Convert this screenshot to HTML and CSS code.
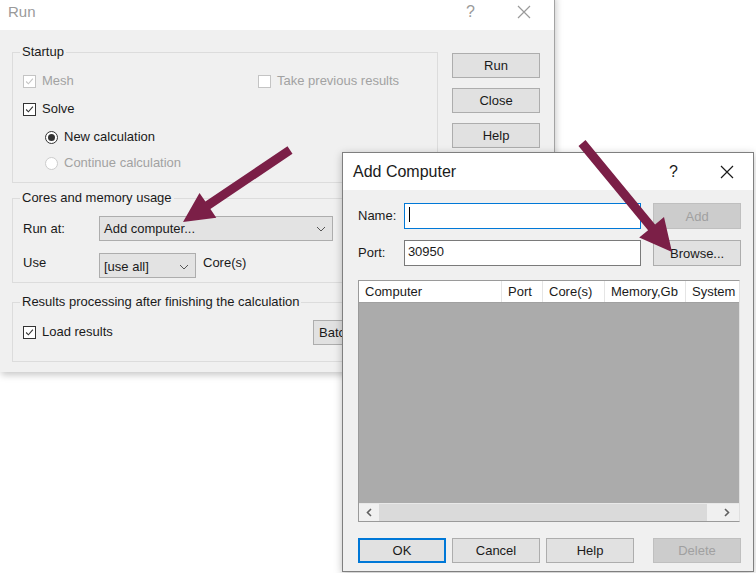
FILE: index.html
```html
<!DOCTYPE html>
<html lang="en">

<head>
    <meta charset="UTF-8">
    <title>Run / Add Computer</title>
    <link rel="stylesheet" href="styles.css">
</head>

<body>

    <div class="win run-win">
        <div class="titlebar inactive">
            <span class="title">Run</span>
            <span class="cap-btn">?</span>
            <span class="cap-btn">
                <svg width="14" height="14" viewBox="0 0 14 14"><path d="M1 1 L13 13 M13 1 L1 13" /></svg>
            </span>
        </div>
        <div class="run-body">
            <div class="run-main">
                <div class="group startup">
                    <span class="caption">Startup</span>
                    <div class="row two-col">
                        <span class="check disabled"><span class="box"><svg viewBox="0 0 13 13"><path d="M2.5 6.5 L5.2 9.2 L10.5 3.2" /></svg></span>Mesh</span>
                        <span class="check disabled"><span class="box"></span>Take previous results</span>
                    </div>
                    <div class="row">
                        <span class="check"><span class="box"><svg viewBox="0 0 13 13"><path d="M2.5 6.5 L5.2 9.2 L10.5 3.2" /></svg></span>Solve</span>
                    </div>
                    <div class="row indent">
                        <span class="check"><span class="radio on"></span>New calculation</span>
                    </div>
                    <div class="row indent last">
                        <span class="check disabled"><span class="radio"></span>Continue calculation</span>
                    </div>
                </div>

                <div class="group cores">
                    <span class="caption">Cores and memory usage</span>
                    <div class="form-row">
                        <span class="form-label">Run at:</span>
                        <div class="combo wide">Add computer...
                            <svg class="chev" width="10" height="6" viewBox="0 0 10 6"><path d="M1 1 L5 5 L9 1" /></svg>
                        </div>
                    </div>
                    <div class="form-row top">
                        <span class="form-label">Use</span>
                        <div class="combo narrow">[use all]
                            <svg class="chev" width="10" height="6" viewBox="0 0 10 6"><path d="M1 1 L5 5 L9 1" /></svg>
                        </div>
                        <span class="after">Core(s)</span>
                    </div>
                </div>

                <div class="group results">
                    <span class="caption">Results processing after finishing the calculation</span>
                    <div class="row results-row">
                        <span class="check"><span class="box"><svg viewBox="0 0 13 13"><path d="M2.5 6.5 L5.2 9.2 L10.5 3.2" /></svg></span>Load results</span>
                        <button class="btn batch">Batch...</button>
                    </div>
                </div>
            </div>

            <div class="run-side">
                <button class="btn">Run</button>
                <button class="btn">Close</button>
                <button class="btn">Help</button>
            </div>
        </div>
    </div>

    <div class="win add-win">
        <div class="titlebar">
            <span class="title">Add Computer</span>
            <span class="cap-btn">?</span>
            <span class="cap-btn">
                <svg width="14" height="14" viewBox="0 0 14 14"><path d="M1 1 L13 13 M13 1 L1 13" /></svg>
            </span>
        </div>
        <div class="add-body">
            <div class="field-row">
                <span class="field-label">Name:</span>
                <div class="input focus"><span class="caret"></span></div>
                <button class="btn disabled">Add</button>
            </div>
            <div class="field-row">
                <span class="field-label">Port:</span>
                <div class="input">30950</div>
                <button class="btn">Browse...</button>
            </div>

            <div class="list">
                <div class="list-head">
                    <span class="col c-computer">Computer</span>
                    <span class="col c-port">Port</span>
                    <span class="col c-cores">Core(s)</span>
                    <span class="col c-mem">Memory,Gb</span>
                    <span class="col c-sys">System</span>
                </div>
                <div class="list-area"></div>
                <div class="hscroll">
                    <span class="sb-btn"><svg width="6" height="9" viewBox="0 0 6 9"><path d="M5 1 L1.5 4.5 L5 8" /></svg></span>
                    <span class="sb-thumb"></span>
                    <span class="sb-btn right"><svg width="6" height="9" viewBox="0 0 6 9"><path d="M1 1 L4.5 4.5 L1 8" /></svg></span>
                </div>
            </div>

            <div class="btn-row">
                <button class="btn focus">OK</button>
                <button class="btn">Cancel</button>
                <button class="btn">Help</button>
                <button class="btn disabled push">Delete</button>
            </div>
        </div>
    </div>

    <svg class="arrows" width="756" height="573" viewBox="0 0 756 573">
        <polygon points="292.5,153.7 210.4,209 216.3,217.7 183,222 199.5,192.9 205.4,201.6 287.5,146.3" />
        <polygon points="585.5,140.1 655.1,224.4 664,217.1 672,252 639.2,237.5 648.1,230.2 578.5,145.9" />
    </svg>

</body>

</html>
```

FILE: styles.css
```css
body {
    margin: 0;
    width: 756px;
    height: 573px;
    overflow: hidden;
    background-color: #ffffff;
    font-family: "Liberation Sans", Arial, sans-serif;
    font-size: 13px;
    line-height: 16px;
    color: #000;
    position: relative;
}

/* windows */
.win {
    position: absolute;
    box-sizing: border-box;
    display: flex;
    flex-direction: column;
    background-color: #f0f0f0;
}

.run-win {
    left: 0;
    top: -6px;
    width: 555px;
    height: 378px;
    border-right: 1px solid #a3a3a3;
    box-shadow: 1px 3px 7px rgba(0, 0, 0, 0.22);
}

.add-win {
    left: 342px;
    top: 152px;
    width: 412px;
    height: 420px;
    border: 1px solid #7f7f7f;
    box-shadow: 0 2px 8px rgba(0, 0, 0, 0.25);
}

.titlebar {
    display: flex;
    align-items: center;
    height: 37px;
    flex: none;
    background-color: #fff;
    padding-left: 10px;
    color: #1a1a1a;
}

.titlebar .title {
    font-size: 16px;
    margin-right: auto;
}

.titlebar.inactive {
    height: 36px;
    padding-left: 8px;
    padding-right: 4px;
    color: #9a9a9a;
}

.titlebar.inactive .title {
    font-size: 15px;
}

.cap-btn {
    width: 53px;
    height: 100%;
    display: flex;
    align-items: center;
    justify-content: center;
    font-size: 16px;
}

.cap-btn svg path {
    stroke: currentColor;
    stroke-width: 1.2;
    fill: none;
}

/* Run dialog body */
.run-body {
    flex: 1;
    display: flex;
    gap: 14px;
    padding: 22px 0 0 12px;
}

.run-main {
    width: 426px;
    display: flex;
    flex-direction: column;
}

.group {
    position: relative;
    border: 1px solid #dcdcdc;
}

.caption {
    position: absolute;
    top: -9px;
    left: 7px;
    padding: 0 2px;
    background-color: #f0f0f0;
    color: #1a1a1a;
}

.startup {
    padding: 14px 0 7px 10px;
}

.cores {
    margin-top: 15px;
    padding: 17px 0 4px 10px;
}

.results {
    margin-top: 19px;
    padding: 16px 0 16px 10px;
}

.row {
    height: 28px;
    display: flex;
    align-items: center;
}

.row.last {
    height: 24px;
}

.row.indent {
    padding-left: 22px;
}

.two-col {
    display: grid;
    grid-template-columns: 235px auto;
    align-items: center;
}

.check {
    display: flex;
    align-items: center;
    gap: 6px;
    color: #1a1a1a;
}

.check.disabled {
    color: #a2a2a2;
}

.box {
    width: 13px;
    height: 13px;
    box-sizing: border-box;
    border: 1px solid #333;
    background-color: #fff;
    display: flex;
}

.box svg {
    width: 11px;
    height: 11px;
}

.box svg path {
    fill: none;
    stroke: #333;
    stroke-width: 1.3;
}

.disabled .box {
    border-color: #c4c4c4;
}

.disabled .box svg path {
    stroke: #c4c4c4;
}

.radio {
    width: 13px;
    height: 13px;
    box-sizing: border-box;
    border: 1px solid #333;
    border-radius: 50%;
    background-color: #fff;
    display: flex;
    align-items: center;
    justify-content: center;
}

.radio.on::after {
    content: "";
    width: 7px;
    height: 7px;
    border-radius: 50%;
    background-color: #333;
}

.disabled .radio {
    border-color: #cccccc;
}

.form-row {
    display: flex;
    align-items: center;
}

.form-row + .form-row {
    margin-top: 12px;
}

.form-row.top {
    align-items: flex-start;
}

.form-row.top .form-label,
.form-row.top .after {
    padding-top: 2px;
}

.form-label {
    width: 76px;
    color: #1a1a1a;
}

.after {
    margin-left: 7px;
    color: #1a1a1a;
}

.combo {
    height: 25px;
    box-sizing: border-box;
    border: 1px solid #adadad;
    background-color: #e3e3e3;
    display: flex;
    align-items: center;
    padding-left: 4px;
    color: #1a1a1a;
}

.combo.wide {
    width: 234px;
}

.combo.narrow {
    width: 97px;
    padding-top: 3px;
}

.chev {
    margin-left: auto;
    margin-right: 6px;
}

.chev path {
    fill: none;
    stroke: #555;
    stroke-width: 1;
}

.results-row {
    height: 26px;
}

.btn {
    width: 88px;
    height: 25px;
    box-sizing: border-box;
    border: 1px solid #adadad;
    background-color: #e1e1e1;
    font-family: inherit;
    font-size: 13px;
    color: #1a1a1a;
    padding: 0;
}

.batch {
    margin-left: auto;
    margin-right: 36px;
    text-align: left;
    padding-left: 5px;
}

.run-side {
    padding-top: 1px;
    display: flex;
    flex-direction: column;
    gap: 10px;
}

/* Add Computer body */
.add-body {
    flex: 1;
    padding: 13px 12px 0 15px;
    display: flex;
    flex-direction: column;
}

.field-row {
    display: flex;
    align-items: center;
    height: 26px;
}

.field-row + .field-row {
    margin-top: 11px;
}

.field-label {
    width: 46px;
    color: #1a1a1a;
}

.input {
    width: 238px;
    height: 26px;
    box-sizing: border-box;
    border: 1px solid #7a7a7a;
    background-color: #fff;
    padding: 3px 0 0 3px;
    margin-right: 12px;
    color: #1a1a1a;
}

.input.focus {
    border-color: #0078d7;
}

.caret {
    display: block;
    width: 1px;
    height: 15px;
    margin-left: 1px;
    background-color: #000;
}

.field-row .btn {
    height: 26px;
}

.btn.disabled {
    background-color: #cccccc;
    border-color: #bfbfbf;
    color: #a0a0a0;
}

.list {
    margin-top: 14px;
    width: 382px;
    height: 242px;
    box-sizing: border-box;
    border: 1px solid #9a9a9a;
    border-right-color: #e0e0e0;
    display: flex;
    flex-direction: column;
    overflow: hidden;
}

.list-head {
    height: 21px;
    flex: none;
    display: flex;
    background-color: #fff;
    border-bottom: 1px solid #a0a0a0;
}

.col {
    box-sizing: border-box;
    flex: none;
    padding-left: 6px;
    line-height: 21px;
    border-right: 1px solid #e5e5e5;
    color: #1a1a1a;
    white-space: nowrap;
    overflow: hidden;
}

.c-computer { width: 143px; }
.c-port { width: 41px; }
.c-cores { width: 62px; }
.c-mem { width: 81px; }
.c-sys { width: 60px; border-right: 0; }

.list-area {
    flex: 1;
    background-color: #ababab;
}

.hscroll {
    height: 17px;
    flex: none;
    display: flex;
    background-color: #f0f0f0;
    border-top: 1px solid #e8e8e8;
}

.sb-btn {
    width: 20px;
    display: flex;
    align-items: center;
    justify-content: center;
}

.sb-btn.right {
    margin-left: 8px;
    width: 24px;
}

.sb-btn path {
    fill: none;
    stroke: #606060;
    stroke-width: 1.6;
}

.sb-thumb {
    width: 330px;
    background-color: #dadada;
}

.btn-row {
    margin-top: 16px;
    display: flex;
    gap: 6px;
}

.btn.focus {
    border: 2px solid #0078d7;
}

.btn.push {
    margin-left: auto;
}

/* annotation arrows */
.arrows {
    position: absolute;
    left: 0;
    top: 0;
    pointer-events: none;
}

.arrows polygon {
    fill: #7b1f47;
}
```
